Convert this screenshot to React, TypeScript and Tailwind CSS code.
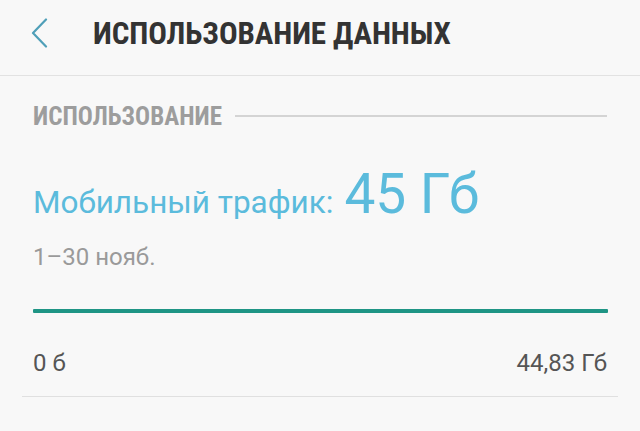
import React from "react";

export default function App() {
  return (
    <div className="w-[640px] h-[431px] bg-[#f8f8f8] overflow-hidden" style={{ fontFamily: "Roboto, 'Noto Sans', sans-serif" }}>
      <div className="h-[76px] flex items-center pl-[31px] pb-[9px] border-b border-[#e2e2e2]">
        <svg width="17" height="30" viewBox="0 0 17 30" className="shrink-0">
          <polyline points="15,1.5 2,15 15,28.5" fill="none" stroke="#4f9fb8" strokeWidth="2.2" strokeLinecap="round" strokeLinejoin="round" />
        </svg>
        <div className="ml-[45px] text-[31px] leading-none font-bold text-[#333333] tracking-[-0.1px]" style={{ fontFamily: "'Roboto Condensed', 'Liberation Sans Narrow', Roboto, sans-serif" }}>
          ИСПОЛЬЗОВАНИЕ ДАННЫХ
        </div>
      </div>
      <div className="px-[33px]">
        <div className="flex items-center mt-[28px]">
          <div className="text-[25px] leading-none font-bold text-[#9d9d9d]" style={{ fontFamily: "'Roboto Condensed', 'Liberation Sans Narrow', Roboto, sans-serif" }}>
            ИСПОЛЬЗОВАНИЕ
          </div>
          <div className="flex-1 h-[2px] bg-[#d4d4d4] ml-[13px] mt-[-2px]" />
        </div>
        <div className="flex items-baseline mt-[38px] text-[#5bbbdc] h-[56px]">
          <span className="text-[31.5px] leading-none">Мобильный трафик:</span>
          <span className="text-[55px] leading-none ml-[11px]">45 Гб</span>
        </div>
        <div className="mt-[22px] text-[24px] leading-none text-[#9a9a9a]">1–30 нояб.</div>
        <div className="mt-[40px] h-[4px] bg-[#1f9585] rounded-[1px] mr-[-1px]" />
        <div className="flex justify-between mt-[38px] text-[24px] leading-none text-[#555555]">
          <span>0 б</span>
          <span>44,83 Гб</span>
        </div>
      </div>
      <div className="mx-[22px] mt-[21px] h-px bg-[#e0e0e0]" />
    </div>
  );
}
